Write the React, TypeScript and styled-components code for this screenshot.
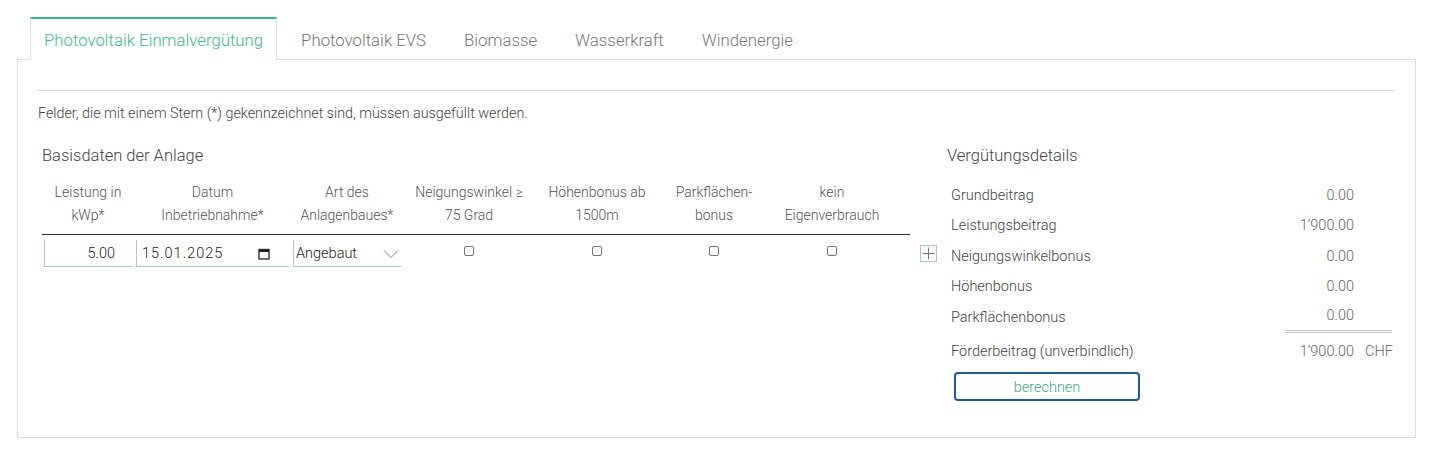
import React from 'react';
import styled, { createGlobalStyle } from 'styled-components';

const GlobalStyle = createGlobalStyle`
  * {
    box-sizing: border-box;
  }
  body {
    margin: 0;
    background: #fff;
    font-family: Roboto, "Liberation Sans", sans-serif;
    font-weight: 300;
    color: #444;
  }
`;

const GREEN = '#3cb98d';
const FIELD_BORDER = '#a8c8c9';
const COLS = '92px 157px 112px 132px 124px 110px 126px 15px';

const Page = styled.div`
  padding: 17px 16px 17px 17px;
`;

const TabBar = styled.div`
  display: flex;
  gap: 10px;
  padding-left: 13px;
  margin-bottom: -1px;
  position: relative;
  z-index: 1;
`;

const Tab = styled.div<{ $active?: boolean }>`
  display: flex;
  align-items: center;
  height: 43px;
  padding: 0 13px;
  font-size: 16.8px;
  color: ${(p) => (p.$active ? GREEN : '#777')};
  background: ${(p) => (p.$active ? '#fff' : 'transparent')};
  border: 1px solid ${(p) => (p.$active ? '#ddd' : 'transparent')};
  border-top: 2px solid ${(p) => (p.$active ? GREEN : 'transparent')};
  border-bottom: none;
  cursor: pointer;
`;

const Panel = styled.div`
  border: 1px solid #ddd;
  padding: 30px 20px 36px 20px;
`;

const Divider = styled.div`
  border-top: 1px solid #ddd;
`;

const Notice = styled.p`
  margin: 13px 0 0;
  font-size: 14.3px;
  line-height: 18px;
  color: #444;
`;

const Columns = styled.div`
  display: flex;
  margin-top: 23px;
`;

const LeftColumn = styled.section`
  width: 905px;
  padding-left: 4px;
`;

const RightColumn = styled.section`
  flex: 1;
  padding-left: 4px;
`;

const Heading = styled.h3`
  margin: 0;
  font-size: 16.5px;
  line-height: 22px;
  font-weight: 300;
  color: #444;
`;

const HeaderRow = styled.div`
  display: grid;
  grid-template-columns: ${COLS};
  width: 868px;
  margin-top: 14px;
  border-bottom: 1px solid #333;
`;

const HeaderCell = styled.div`
  padding: 0 2px 7px;
  font-size: 14px;
  line-height: 23px;
  text-align: center;
  color: #555;
`;

const BodyRow = styled.div`
  display: grid;
  grid-template-columns: ${COLS} 30px;
  margin-top: 5px;
  height: 27px;
`;

const Cell = styled.div<{ $center?: boolean }>`
  display: flex;
  align-items: center;
  justify-content: ${(p) => (p.$center ? 'center' : 'flex-start')};
  padding: 0 2px;
  position: relative;
`;

const FieldInput = styled.input<{ $right?: boolean }>`
  width: 100%;
  height: 27px;
  border: none;
  border-left: 1px solid ${FIELD_BORDER};
  border-bottom: 1px solid ${FIELD_BORDER};
  background: transparent;
  font-family: Roboto, "Liberation Sans", sans-serif;
  font-weight: 300;
  font-size: 14.5px;
  color: #222;
  outline: none;
  text-align: ${(p) => (p.$right ? 'right' : 'left')};
  padding: ${(p) => (p.$right ? '0 17px 0 4px' : '0 4px')};
`;

const DateInput = styled(FieldInput)`
  letter-spacing: 1px;
  padding: 0 30px 0 5px;
`;

const SelectBox = styled(FieldInput).attrs({ as: 'select' })`
  appearance: none;
  padding: 0 20px 0 2px;
  cursor: pointer;
`;

const FieldIcon = styled.span<{ $right: number }>`
  position: absolute;
  right: ${(p) => p.$right}px;
  top: 50%;
  transform: translateY(-50%);
  display: flex;
  pointer-events: none;
`;

const Check = styled.input.attrs({ type: 'checkbox' })`
  appearance: none;
  width: 10px;
  height: 10px;
  margin: 0 0 6px;
  border: 1px solid #777;
  border-radius: 2px;
  background: #fff;
  cursor: pointer;
`;

const AddButton = styled.button`
  width: 17px;
  height: 17px;
  margin-left: 8px;
  padding: 0;
  display: flex;
  align-items: center;
  justify-content: center;
  border: 1px solid ${FIELD_BORDER};
  background: #fff;
  cursor: pointer;
`;

const DetailsTable = styled.div`
  margin-top: 13px;
  width: 445px;
`;

const DetailRow = styled.div<{ $total?: boolean }>`
  display: grid;
  grid-template-columns: 1fr 69px 38px;
  height: 30.5px;
  margin-top: ${(p) => (p.$total ? '4px' : '0')};
  font-size: 14.5px;
  color: #444;
`;

const Label = styled.div`
  display: flex;
  align-items: center;
  padding-left: 4px;
`;

const Amount = styled.div<{ $double?: boolean }>`
  display: flex;
  align-items: center;
  justify-content: flex-end;
  color: #666;
  border-bottom: ${(p) => (p.$double ? '3px double #ccc' : 'none')};
`;

const Unit = styled(Amount)`
  justify-content: flex-start;
  padding-left: 11px;
`;

const CalcButton = styled.button`
  display: block;
  width: 186px;
  height: 29px;
  margin: 5px 0 0 7px;
  padding-top: 2px;
  border: 2px solid #1e5d9b;
  border-radius: 4px;
  background: #fff;
  color: #3fa97f;
  font-family: Roboto, "Liberation Sans", sans-serif;
  font-weight: 300;
  font-size: 14.5px;
  cursor: pointer;
`;

const tabs = ['Photovoltaik Einmalvergütung', 'Photovoltaik EVS', 'Biomasse', 'Wasserkraft', 'Windenergie'];

const headers = [
  ['Leistung in', 'kWp*'],
  ['Datum', 'Inbetriebnahme*'],
  ['Art des', 'Anlagenbaues*'],
  ['Neigungswinkel ≥', '75 Grad'],
  ['Höhenbonus ab', '1500m'],
  ['Parkflächen-', 'bonus'],
  ['kein', 'Eigenverbrauch'],
  [],
];

const details = [
  ['Grundbeitrag', '0.00'],
  ['Leistungsbeitrag', '1’900.00'],
  ['Neigungswinkelbonus', '0.00'],
  ['Höhenbonus', '0.00'],
  ['Parkflächenbonus', '0.00'],
];

const CalendarIcon = () => (
  <svg width="12" height="12" viewBox="0 0 12 12">
    <rect x="1" y="1.5" width="10" height="9.5" fill="none" stroke="#222" strokeWidth="1.3" />
    <rect x="1" y="1.5" width="10" height="2.5" fill="#222" />
  </svg>
);

const Chevron = () => (
  <svg width="16" height="9" viewBox="0 0 16 9">
    <polyline points="1,1 8,8 15,1" fill="none" stroke="#888" strokeWidth="1" />
  </svg>
);

const PlusIcon = () => (
  <svg width="13" height="13" viewBox="0 0 13 13">
    <line x1="6.5" y1="0.5" x2="6.5" y2="12.5" stroke="#777" strokeWidth="1" />
    <line x1="0.5" y1="6.5" x2="12.5" y2="6.5" stroke="#777" strokeWidth="1" />
  </svg>
);

const App = () => {
  return (
    <Page>
      <GlobalStyle />
      <TabBar>
        {tabs.map((t, i) => (
          <Tab key={t} $active={i === 0}>
            {t}
          </Tab>
        ))}
      </TabBar>
      <Panel>
        <Divider />
        <Notice>Felder, die mit einem Stern (*) gekennzeichnet sind, müssen ausgefüllt werden.</Notice>
        <Columns>
          <LeftColumn>
            <Heading>Basisdaten der Anlage</Heading>
            <HeaderRow>
              {headers.map((h, i) => (
                <HeaderCell key={i}>
                  {h.map((line) => (
                    <div key={line}>{line}</div>
                  ))}
                </HeaderCell>
              ))}
            </HeaderRow>
            <BodyRow>
              <Cell>
                <FieldInput $right defaultValue="5.00" />
              </Cell>
              <Cell>
                <DateInput defaultValue="15.01.2025" />
                <FieldIcon $right={21}>
                  <CalendarIcon />
                </FieldIcon>
              </Cell>
              <Cell>
                <SelectBox defaultValue="Angebaut">
                  <option>Angebaut</option>
                  <option>Integriert</option>
                  <option>Freistehend</option>
                </SelectBox>
                <FieldIcon $right={4}>
                  <Chevron />
                </FieldIcon>
              </Cell>
              <Cell $center>
                <Check />
              </Cell>
              <Cell $center>
                <Check />
              </Cell>
              <Cell $center>
                <Check />
              </Cell>
              <Cell $center>
                <Check />
              </Cell>
              <Cell />
              <Cell>
                <AddButton aria-label="Zeile hinzufügen">
                  <PlusIcon />
                </AddButton>
              </Cell>
            </BodyRow>
          </LeftColumn>
          <RightColumn>
            <Heading>Vergütungsdetails</Heading>
            <DetailsTable>
              {details.map(([label, value], i) => (
                <DetailRow key={label}>
                  <Label>{label}</Label>
                  <Amount $double={i === details.length - 1}>{value}</Amount>
                  <Unit $double={i === details.length - 1} />
                </DetailRow>
              ))}
              <DetailRow $total>
                <Label>Förderbeitrag (unverbindlich)</Label>
                <Amount>1’900.00</Amount>
                <Unit>CHF</Unit>
              </DetailRow>
            </DetailsTable>
            <CalcButton>berechnen</CalcButton>
          </RightColumn>
        </Columns>
      </Panel>
    </Page>
  );
};

export default App;
